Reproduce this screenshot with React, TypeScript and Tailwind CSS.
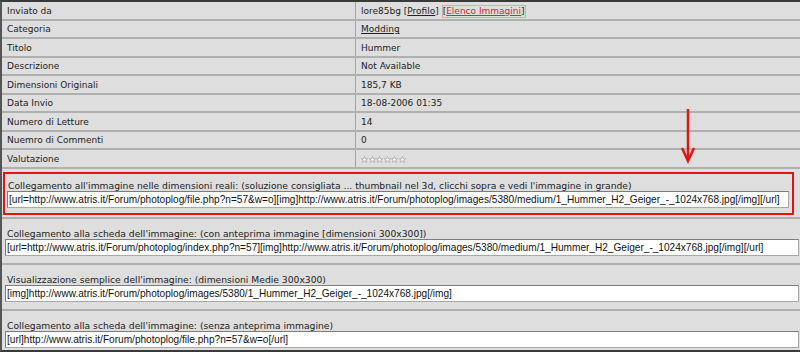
import React from "react";

const rows = [
  { label: "Inviato da", value: "user" },
  { label: "Categoria", value: "cat" },
  { label: "Titolo", value: "Hummer" },
  { label: "Descrizione", value: "Not Available" },
  { label: "Dimensioni Originali", value: "185,7 KB" },
  { label: "Data Invio", value: "18-08-2006 01:35" },
  { label: "Numero di Letture", value: "14" },
  { label: "Nuemro di Commenti", value: "0" },
  { label: "Valutazione", value: "stars" },
];

const links = [
  {
    label:
      "Collegamento alla scheda dell'immagine: (con anteprima immagine [dimensioni 300x300])",
    code: "[url=http://www.atris.it/Forum/photoplog/index.php?n=57][img]http://www.atris.it/Forum/photoplog/images/5380/medium/1_Hummer_H2_Geiger_-_1024x768.jpg[/img][/url]",
  },
  {
    label: "Visualizzazione semplice dell'immagine: (dimensioni Medie 300x300)",
    code: "[img]http://www.atris.it/Forum/photoplog/images/5380/1_Hummer_H2_Geiger_-_1024x768.jpg[/img]",
  },
  {
    label: "Collegamento alla scheda dell'immagine: (senza anteprima immagine)",
    code: "[url]http://www.atris.it/Forum/photoplog/file.php?n=57&w=o[/url]",
  },
];

const labelFont = "font-['DejaVu_Sans',Verdana,sans-serif] text-[9px] text-[#222]";
const sectionFont = "font-['DejaVu_Sans',Verdana,sans-serif] text-[9.2px] text-[#222]";
const codeFont = "font-['Liberation_Sans',Arial,sans-serif] text-[10.1px] text-[#111]";

function Star() {
  return (
    <svg width="7" height="7" viewBox="0 0 10 10" className="shrink-0">
      <path
        d="M5 0.6 L6.2 3.8 L9.5 3.9 L6.9 5.9 L7.9 9.3 L5 7.3 L2.1 9.3 L3.1 5.9 L0.5 3.9 L3.8 3.8 Z"
        fill="#f4f4f4"
        stroke="#a6a6a6"
        strokeWidth="1"
      />
    </svg>
  );
}

function Value({ kind }: { kind: string }) {
  if (kind === "user") {
    return (
      <span className="flex items-center">
        lore85bg&nbsp;[<span className="underline">Profilo</span>]&nbsp;
        <span className="border border-[#e6a4a4] leading-[11px]">
          [<span className="underline text-[#d22a2a]">Elenco Immagini</span>]
        </span>
      </span>
    );
  }
  if (kind === "cat") return <span className="underline">Modding</span>;
  if (kind === "stars") {
    return (
      <span className="flex items-center gap-[0.5px]">
        <Star />
        <Star />
        <Star />
        <Star />
        <Star />
        <Star />
      </span>
    );
  }
  return <span>{kind}</span>;
}

function CodeBox({ code }: { code: string }) {
  return (
    <div className="h-[17px] bg-white border border-[#a8a8a8] border-t-[#7c7c7c] border-l-[#7c7c7c] flex items-center pl-[1px] overflow-hidden whitespace-nowrap">
      <span className={codeFont}>{code}</span>
    </div>
  );
}

export default function App() {
  return (
    <div className="relative w-[800px] h-[352px] bg-[#dedede] overflow-hidden border-t-2 border-l-2 border-b-2 border-[#3a3a3a] border-l-[#555]">
      {/* info table */}
      <div className="flex flex-col">
        {rows.map((r, i) => (
          <div
            key={r.label}
            className={`flex border-b-2 border-[#b0b0b0] ${i % 2 === 0 ? "h-[19px]" : "h-[18px]"}`}
          >
            <div className={`w-[353px] pl-[5px] pt-[2px] flex items-center ${labelFont}`}>{r.label}</div>
            <div className={`flex-1 pl-[5px] pt-[2px] flex items-center border-l border-[#a4a4a4] ${labelFont}`}>
              <Value kind={r.value} />
            </div>
          </div>
        ))}
      </div>

      {/* highlighted link */}
      <div className="border-b-2 border-[#b0b0b0] pt-[3px] pb-[2px] pl-[1px] pr-[6px]">
        <div className="border-2 border-[#e01414] pt-[5px] pb-[5px] pl-[2px] pr-[3px]">
          <div className={`h-[12px] leading-[14px] pl-[1px] whitespace-nowrap ${sectionFont}`}>
            Collegamento all'immagine nelle dimensioni reali: (soluzione consigliata ... thumbnail nel 3d, clicchi sopra e vedi l'immagine in grande)
          </div>
          <CodeBox code="[url=http://www.atris.it/Forum/photoplog/file.php?n=57&w=o][img]http://www.atris.it/Forum/photoplog/images/5380/medium/1_Hummer_H2_Geiger_-_1024x768.jpg[/img][/url]" />
        </div>
      </div>

      {/* other links */}
      {links.map((l, i) => (
        <div
          key={l.label}
          className={`pt-[8px] pl-[3px] pr-[1px] ${i < links.length - 1 ? "pb-[7px] border-b-2 border-[#b0b0b0]" : "pb-[2px]"}`}
        >
          <div className={`h-[12px] leading-[14px] pl-[2px] whitespace-nowrap ${sectionFont}`}>{l.label}</div>
          <CodeBox code={l.code} />
        </div>
      ))}

      {/* red arrow annotation */}
      <svg className="absolute left-[676px] top-[104px]" width="20" height="58" viewBox="0 0 20 58">
        <line x1="10" y1="3" x2="10" y2="54" stroke="#e01414" strokeWidth="2.5" />
        <polyline points="4,42 10,55 16,42" fill="none" stroke="#e01414" strokeWidth="2.5" />
      </svg>
    </div>
  );
}
